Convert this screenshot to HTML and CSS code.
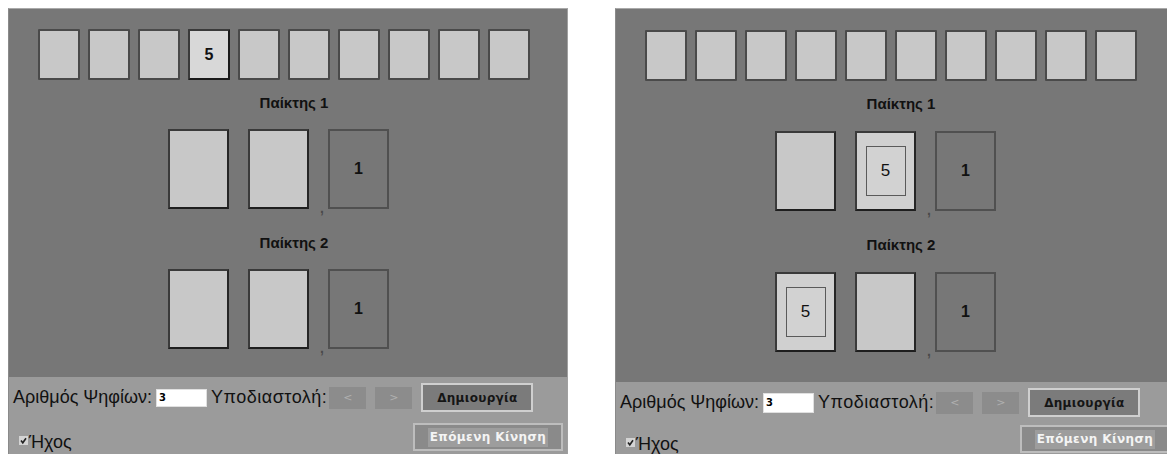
FILE: index.html
```html
<!DOCTYPE html>
<html lang="el">
<head>
<meta charset="utf-8">
<title>Παιχνίδι αριθμών</title>
<link rel="stylesheet" href="styles.css">
</head>
<body>
<div class="stage">
  <section class="panel">
    <div class="deck">
      <div class="mini"></div><div class="mini"></div><div class="mini"></div>
      <div class="mini active">5</div>
      <div class="mini"></div><div class="mini"></div><div class="mini"></div>
      <div class="mini"></div><div class="mini"></div><div class="mini"></div>
    </div>
    <div class="player-label first">Παίκτης 1</div>
    <div class="player-row">
      <div class="slot"></div>
      <div class="slot"></div>
      <span class="comma">,</span>
      <div class="result">1</div>
    </div>
    <div class="player-label">Παίκτης 2</div>
    <div class="player-row">
      <div class="slot"></div>
      <div class="slot"></div>
      <span class="comma">,</span>
      <div class="result">1</div>
    </div>
    <div class="controls">
      <div class="ctrl-row">
        <span class="lbl">Αριθμός Ψηφίων:</span>
        <input class="digits" type="text" value="3">
        <span class="lbl lbl-dec">Υποδιαστολή:</span>
        <button class="arrow">&lt;</button>
        <button class="arrow">&gt;</button>
        <button class="create">Δημιουργία</button>
      </div>
      <div class="ctrl-row second">
        <span class="check"><svg width="9" height="9" viewBox="0 0 9 9"><rect x="0" y="0" width="9" height="9" fill="#d4d4d4"/><path d="M2 4.5 L3.8 6.8 L7 2.2" stroke="#222" stroke-width="1.6" fill="none"/></svg></span>
        <span class="lbl sound">Ήχος</span>
        <button class="next"><span class="next-inner">Επόμενη Κίνηση</span></button>
      </div>
    </div>
  </section>

  <section class="panel panel-b">
    <div class="deck">
      <div class="mini"></div><div class="mini"></div><div class="mini"></div>
      <div class="mini"></div><div class="mini"></div><div class="mini"></div>
      <div class="mini"></div><div class="mini"></div><div class="mini"></div>
      <div class="mini"></div>
    </div>
    <div class="player-label first">Παίκτης 1</div>
    <div class="player-row">
      <div class="slot"></div>
      <div class="slot filled"><div class="inner">5</div></div>
      <span class="comma">,</span>
      <div class="result">1</div>
    </div>
    <div class="player-label">Παίκτης 2</div>
    <div class="player-row">
      <div class="slot filled"><div class="inner">5</div></div>
      <div class="slot"></div>
      <span class="comma">,</span>
      <div class="result">1</div>
    </div>
    <div class="controls">
      <div class="ctrl-row">
        <span class="lbl">Αριθμός Ψηφίων:</span>
        <input class="digits" type="text" value="3">
        <span class="lbl lbl-dec">Υποδιαστολή:</span>
        <button class="arrow">&lt;</button>
        <button class="arrow">&gt;</button>
        <button class="create">Δημιουργία</button>
      </div>
      <div class="ctrl-row second">
        <span class="check"><svg width="9" height="9" viewBox="0 0 9 9"><rect x="0" y="0" width="9" height="9" fill="#d4d4d4"/><path d="M2 4.5 L3.8 6.8 L7 2.2" stroke="#222" stroke-width="1.6" fill="none"/></svg></span>
        <span class="lbl sound">Ήχος</span>
        <button class="next"><span class="next-inner">Επόμενη Κίνηση</span></button>
      </div>
    </div>
  </section>
</div>
</body>
</html>
```

FILE: styles.css
```css
* { box-sizing: border-box; }

html, body {
  margin: 0;
  padding: 0;
  background: #ffffff;
  overflow: hidden;
}

body {
  width: 1167px;
  height: 454px;
  font-family: "Liberation Sans", Arial, sans-serif;
  color: #111;
}

.stage {
  display: flex;
  gap: 47px;
  padding: 8px 0 0 8px;
  width: 1167px;
  height: 454px;
  overflow: hidden;
}

.panel {
  flex: 0 0 560px;
  width: 560px;
  height: 446px;
  background: #777777;
  border-top: 1px solid #a9a9a9;
  border-left: 1px solid #8a8a8a;
  border-right: 1px solid #a0a0a0;
  display: flex;
  flex-direction: column;
}

.deck {
  display: flex;
  gap: 8px;
  padding: 20px 0 0 29px;
}

.mini {
  width: 42px;
  height: 51px;
  background: #c8c8c8;
  border: 2px solid #4a4a4a;
  border-radius: 1px;
  display: flex;
  align-items: center;
  justify-content: center;
  font-weight: bold;
  font-size: 16px;
  color: #111;
}

.mini.active {
  background: #d8d8d8;
  border-color: #3a3a3a #1a1a1a #1a1a1a #3a3a3a;
}

.player-label {
  height: 18px;
  line-height: 18px;
  text-align: center;
  padding-left: 12px;
  font-weight: bold;
  font-size: 15px;
  color: #111;
  margin-top: 25px;
}

.player-label.first {
  margin-top: 14px;
}

.player-row {
  display: flex;
  padding-left: 159px;
  margin-top: 17px;
  height: 80px;
}

.slot {
  width: 61px;
  height: 80px;
  background: #c8c8c8;
  border: 2px solid #3a3a3a;
  border-bottom-color: #1e1e1e;
  border-right-color: #262626;
  margin-right: 19px;
  display: flex;
  align-items: center;
  justify-content: center;
}

.slot.filled {
  background: #d0d0d0;
}

.inner {
  width: 40px;
  height: 50px;
  border: 1px solid #5a5a5a;
  background: #d2d2d2;
  display: flex;
  align-items: center;
  justify-content: center;
  font-size: 17px;
  color: #111;
}

.comma {
  width: 19px;
  margin-left: -19px;
  align-self: flex-end;
  padding-left: 11px;
  font-size: 14px;
  line-height: 10px;
  height: 6px;
  color: #4a4a4a;
  font-weight: bold;
}

.result {
  width: 61px;
  height: 80px;
  border: 2px solid #505050;
  display: flex;
  align-items: center;
  justify-content: center;
  font-weight: bold;
  font-size: 16px;
  color: #111;
}

.controls {
  margin-top: 28px;
  flex: 1;
  background: #9b9b9b;
  padding: 6px 0 0 4px;
}

/* second board is captured about 1% larger */
.panel-b .deck { padding-top: 21px; }
.panel-b .player-row { margin-top: 18px; }
.panel-b .controls { margin-top: 30px; }

.ctrl-row {
  display: flex;
  align-items: center;
  height: 29px;
}

.lbl {
  font-size: 18px;
  color: #111;
  white-space: nowrap;
}

.digits {
  width: 51px;
  height: 18px;
  margin: 0 4px 0 4px;
  border: 1px solid #e0e0e0;
  background: #fff;
  padding: 0 0 0 2px;
  font-family: "DejaVu Sans", sans-serif;
  font-size: 10px;
  font-weight: bold;
  color: #000;
  outline: none;
}

.panel-b .digits { height: 20px; }

.lbl-dec {
  margin-right: 2px;
  letter-spacing: 0.5px;
}

button {
  font-family: "DejaVu Sans", Verdana, sans-serif;
  cursor: default;
}

.arrow {
  width: 37px;
  height: 22px;
  margin-right: 9px;
  background: #8c8c8c;
  border: none;
  color: #b0b0b0;
  font-size: 11px;
  padding: 0;
}

.create {
  width: 112px;
  height: 29px;
  background: #7b7b7b;
  border: 2px solid #cfcfcf;
  color: #151515;
  font-weight: bold;
  font-size: 12px;
  letter-spacing: 0.3px;
  padding: 0;
}

.ctrl-row.second {
  margin-top: 11px;
  height: 28px;
  align-items: flex-end;
}

.panel-b .ctrl-row.second {
  margin-top: 8px;
}

.check {
  display: flex;
  margin-left: 6px;
  margin-bottom: 6px;
}

.sound {
  margin-left: 1px;
  line-height: 20px;
  margin-bottom: -1px;
}

.next {
  margin-left: auto;
  margin-right: 4px;
  width: 150px;
  height: 28px;
  background: #8a8a8a;
  border: 2px solid #bdbdbd;
  padding: 0;
  display: flex;
  align-items: center;
  justify-content: center;
}

.next-inner {
  background: #9d9d9d;
  color: #f4f4f4;
  font-weight: bold;
  font-size: 12px;
  letter-spacing: 0.4px;
  padding: 2px 2px;
  line-height: 15px;
}
```
